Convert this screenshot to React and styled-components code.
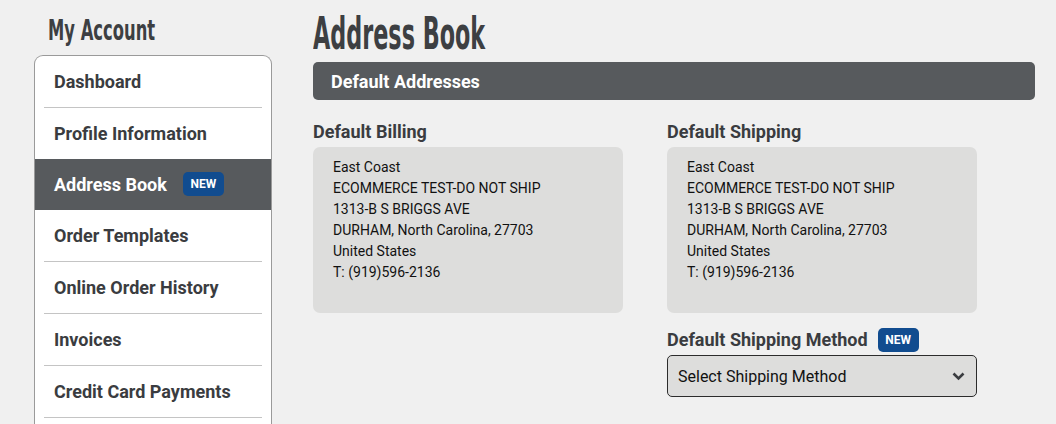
import React from "react";
import styled, { createGlobalStyle } from "styled-components";

const Global = createGlobalStyle`
  html, body {
    margin: 0;
    background: #f0f0f0;
    font-family: Roboto, "Liberation Sans", sans-serif;
  }
`;

const Page = styled.div`
  display: flex;
  align-items: flex-start;
  gap: 41px;
  padding: 0 0 0 34px;
  height: 424px;
  overflow: hidden;
`;

const Sidebar = styled.aside`
  width: 238px;
  flex: none;
`;

const Heading = styled.h1`
  margin: 0;
  font-family: "DejaVu Sans Condensed", "Liberation Sans Narrow", sans-serif;
  font-weight: 700;
  color: #3d3f42;
  white-space: nowrap;
  transform-origin: left top;
  transform: scale(${p => p.$sx}, 1.12);
`;

const SideTitle = styled(Heading)`
  font-size: 26px;
  line-height: 30px;
  margin: 13px 0 0 14px;
  height: 42px;
`;

const Menu = styled.nav`
  background: #fff;
  border: 1px solid #9a9a9a;
  border-bottom: none;
  border-radius: 9px 9px 0 0;
  overflow: hidden;
  min-height: 400px;
`;

const Item = styled.div`
  display: flex;
  align-items: center;
  gap: 16px;
  height: ${p => (p.$active ? "50px" : "51px")};
  margin-top: ${p => (p.$active ? "-1px" : "0")};
  padding: 0 19px;
  font-size: 18px;
  font-weight: 700;
  color: ${p => (p.$active ? "#fff" : "#3a3c40")};
  background: ${p => (p.$active ? "#575a5d" : "transparent")};
  position: relative;
  border-bottom: 1px solid ${p => (p.$active ? "#575a5d" : "transparent")};
  &::after {
    content: "";
    position: absolute;
    left: 9px;
    right: 9px;
    bottom: -1px;
    height: 1px;
    background: ${p => (p.$active ? "transparent" : "#c4c4c4")};
  }
`;

const Badge = styled.span`
  display: inline-flex;
  align-items: center;
  justify-content: center;
  flex: none;
  width: 41px;
  height: 24px;
  border-radius: 5px;
  background: #114c8f;
  color: #fff;
  font-size: 12px;
  font-weight: 700;
`;

const Main = styled.main`
  width: 722px;
  flex: none;
`;

const PageTitle = styled(Heading)`
  font-size: 40px;
  line-height: 44px;
  margin-top: 9px;
  height: 53px;
`;

const Bar = styled.div`
  height: 38px;
  display: flex;
  align-items: center;
  padding: 0 18px;
  background: #575a5d;
  border-radius: 5px;
  color: #fff;
  font-size: 18px;
  font-weight: 700;
`;

const Columns = styled.div`
  display: grid;
  grid-template-columns: 310px 310px;
  column-gap: 44px;
  padding-top: 20px;
`;

const Col = styled.div`
  display: flex;
  flex-direction: column;
`;

const Label = styled.div`
  display: flex;
  align-items: center;
  gap: 10px;
  height: 23px;
  margin-bottom: 4px;
  font-size: 18px;
  font-weight: 700;
  color: #3a3c40;
`;

const Card = styled.div`
  height: 166px;
  box-sizing: border-box;
  padding: 10px 20px;
  background: #dddddc;
  border-radius: 7px;
  font-size: 14px;
  line-height: 21px;
  color: #111;
`;

const MethodLabel = styled(Label)`
  margin-top: 15px;
  margin-bottom: 4px;
`;

const Select = styled.div`
  display: flex;
  align-items: center;
  justify-content: space-between;
  height: 42px;
  box-sizing: border-box;
  padding: 0 11px 0 10px;
  background: #dddddc;
  border: 1px solid #2c2c2c;
  border-radius: 5px;
  font-size: 16px;
  color: #111;
`;

const address = [
  "East Coast",
  "ECOMMERCE TEST-DO NOT SHIP",
  "1313-B S BRIGGS AVE",
  "DURHAM, North Carolina, 27703",
  "United States",
  "T: (919)596-2136",
];

const menu = [
  "Dashboard",
  "Profile Information",
  "Address Book",
  "Order Templates",
  "Online Order History",
  "Invoices",
  "Credit Card Payments",
];

const AddressCard = () => (
  <Card>
    {address.map(line => (
      <div key={line}>{line}</div>
    ))}
  </Card>
);

export default function App() {
  return (
    <>
      <Global />
      <Page>
        <Sidebar>
          <SideTitle $sx={0.7}>My Account</SideTitle>
          <Menu>
            {menu.map(m => (
              <Item key={m} $active={m === "Address Book"}>
                {m}
                {m === "Address Book" && <Badge>NEW</Badge>}
              </Item>
            ))}
          </Menu>
        </Sidebar>
        <Main>
          <PageTitle $sx={0.62}>Address Book</PageTitle>
          <Bar>Default Addresses</Bar>
          <Columns>
            <Col>
              <Label>Default Billing</Label>
              <AddressCard />
            </Col>
            <Col>
              <Label>Default Shipping</Label>
              <AddressCard />
              <MethodLabel>
                Default Shipping Method <Badge>NEW</Badge>
              </MethodLabel>
              <Select>
                Select Shipping Method
                <svg width="13" height="9" viewBox="0 0 13 9">
                  <path d="M1.5 1.5 L6.5 6.5 L11.5 1.5" fill="none" stroke="#3a3c40" strokeWidth="2.6" />
                </svg>
              </Select>
            </Col>
          </Columns>
        </Main>
      </Page>
    </>
  );
}
